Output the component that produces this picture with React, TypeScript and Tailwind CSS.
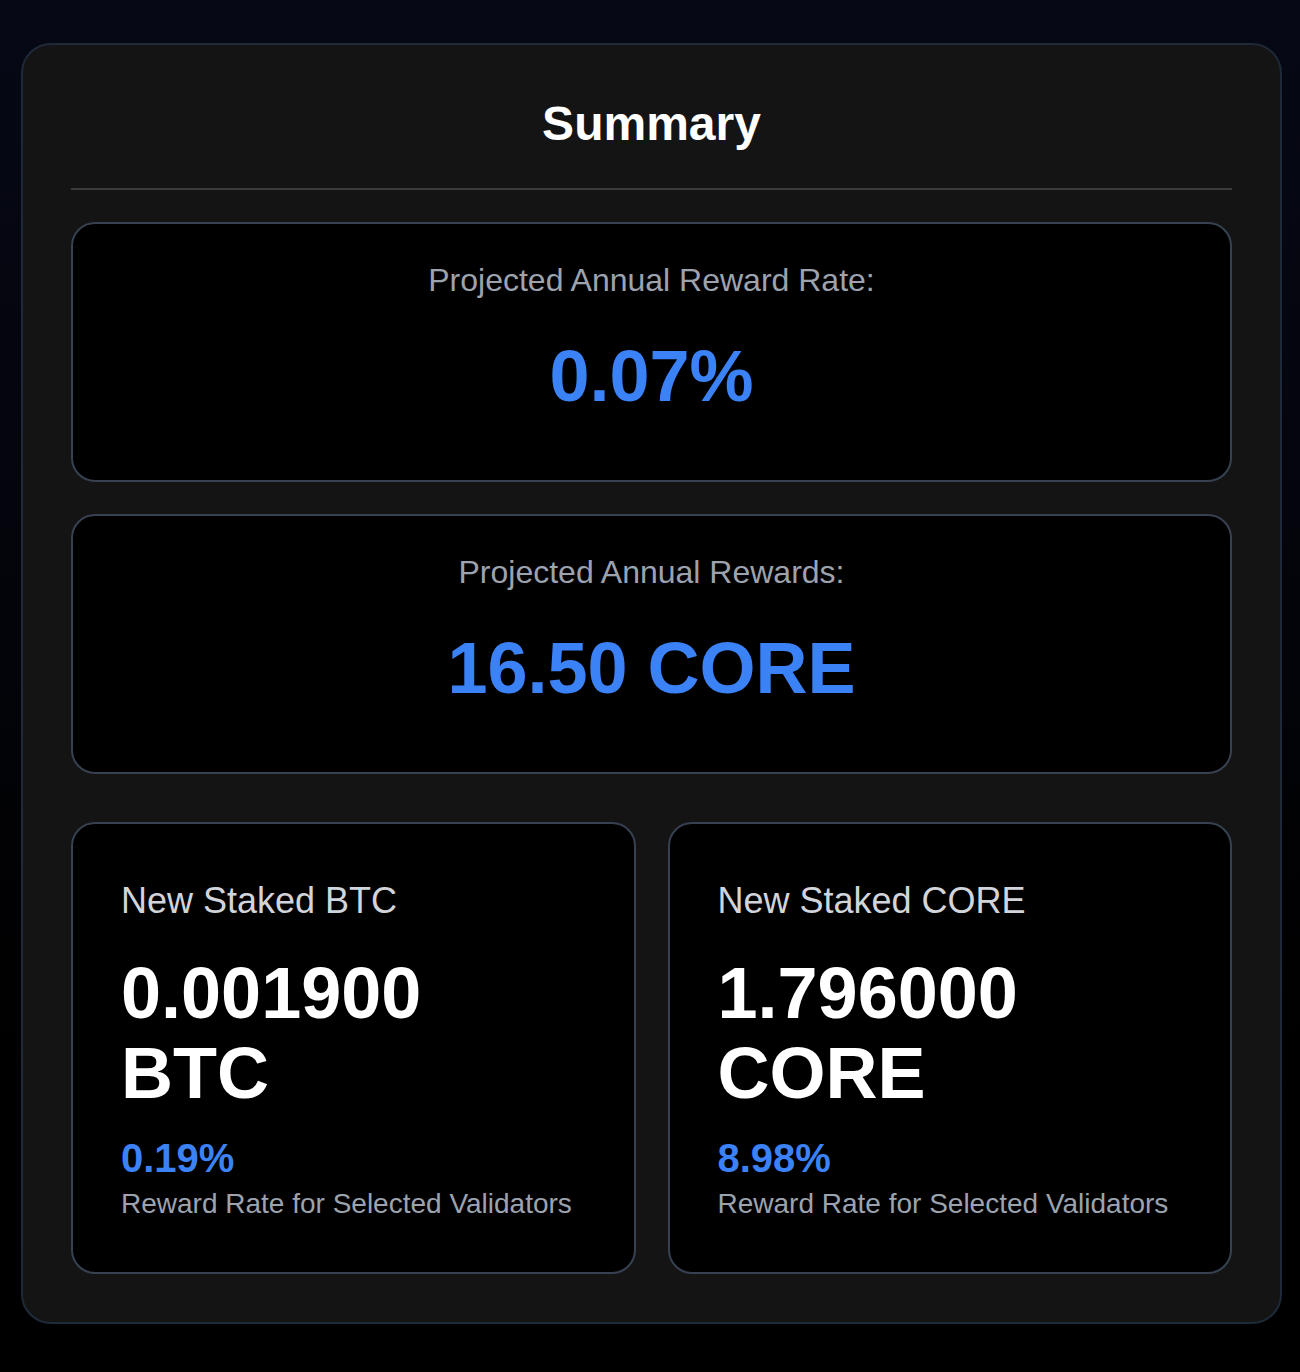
export default function App() {
  const font = { fontFamily: '"Liberation Sans", Arial, sans-serif' };

  return (
    <div
      className="min-h-[1372px] w-full bg-gradient-to-b from-[#060815] via-[#030409] to-black pl-[21px] pr-[18px] pt-[43px] pb-[49px]"
      style={font}
    >
      <div className="rounded-[30px] border-2 border-[#1e2939] bg-[#141414] px-[48px] pt-[47px] pb-[48px]">
        <h1 className="border-b-2 border-[#3b3b3b] pb-[32px] text-center text-[48px] leading-[64px] font-bold text-white">
          Summary
        </h1>

        <div className="mt-[32px] flex flex-col gap-[32px]">
          <div className="flex flex-col items-center rounded-[24px] border-2 border-[#374151] bg-black pt-[32px] pb-[64px]">
            <p className="text-[32px] leading-[48px] text-[#9ca3af]">
              Projected Annual Reward Rate:
            </p>
            <p className="mt-[32px] text-[72px] leading-[80px] font-bold text-[#3b82f6]">
              0.07%
            </p>
          </div>

          <div className="flex flex-col items-center rounded-[24px] border-2 border-[#374151] bg-black pt-[32px] pb-[64px]">
            <p className="text-[32px] leading-[48px] text-[#9ca3af]">
              Projected Annual Rewards:
            </p>
            <p className="mt-[32px] text-[72px] leading-[80px] font-bold text-[#3b82f6]">
              16.50 CORE
            </p>
          </div>
        </div>

        <div className="mt-[48px] grid grid-cols-2 gap-[32px]">
          <StakeCard label="New Staked BTC" amount="0.001900" unit="BTC" rate="0.19%" />
          <StakeCard label="New Staked CORE" amount="1.796000" unit="CORE" rate="8.98%" />
        </div>
      </div>
    </div>
  );
}

function StakeCard({
  label,
  amount,
  unit,
  rate,
}: {
  label: string;
  amount: string;
  unit: string;
  rate: string;
}) {
  return (
    <div className="rounded-[24px] border-2 border-[#374151] bg-black px-[48px] pt-[49px] pb-[48px]">
      <p className="text-[36px] leading-[56px] text-[#d1d5db]">{label}</p>
      <p className="mt-[24px] text-[72px] leading-[80px] font-bold text-white">
        <span className="block">{amount}</span>
        <span className="block">{unit}</span>
      </p>
      <p className="mt-[21px] text-[40px] leading-[48px] font-bold text-[#3b82f6]">{rate}</p>
      <p className="mt-[2px] text-[28px] leading-[40px] text-[#9ca3af]">
        Reward Rate for Selected Validators
      </p>
    </div>
  );
}
